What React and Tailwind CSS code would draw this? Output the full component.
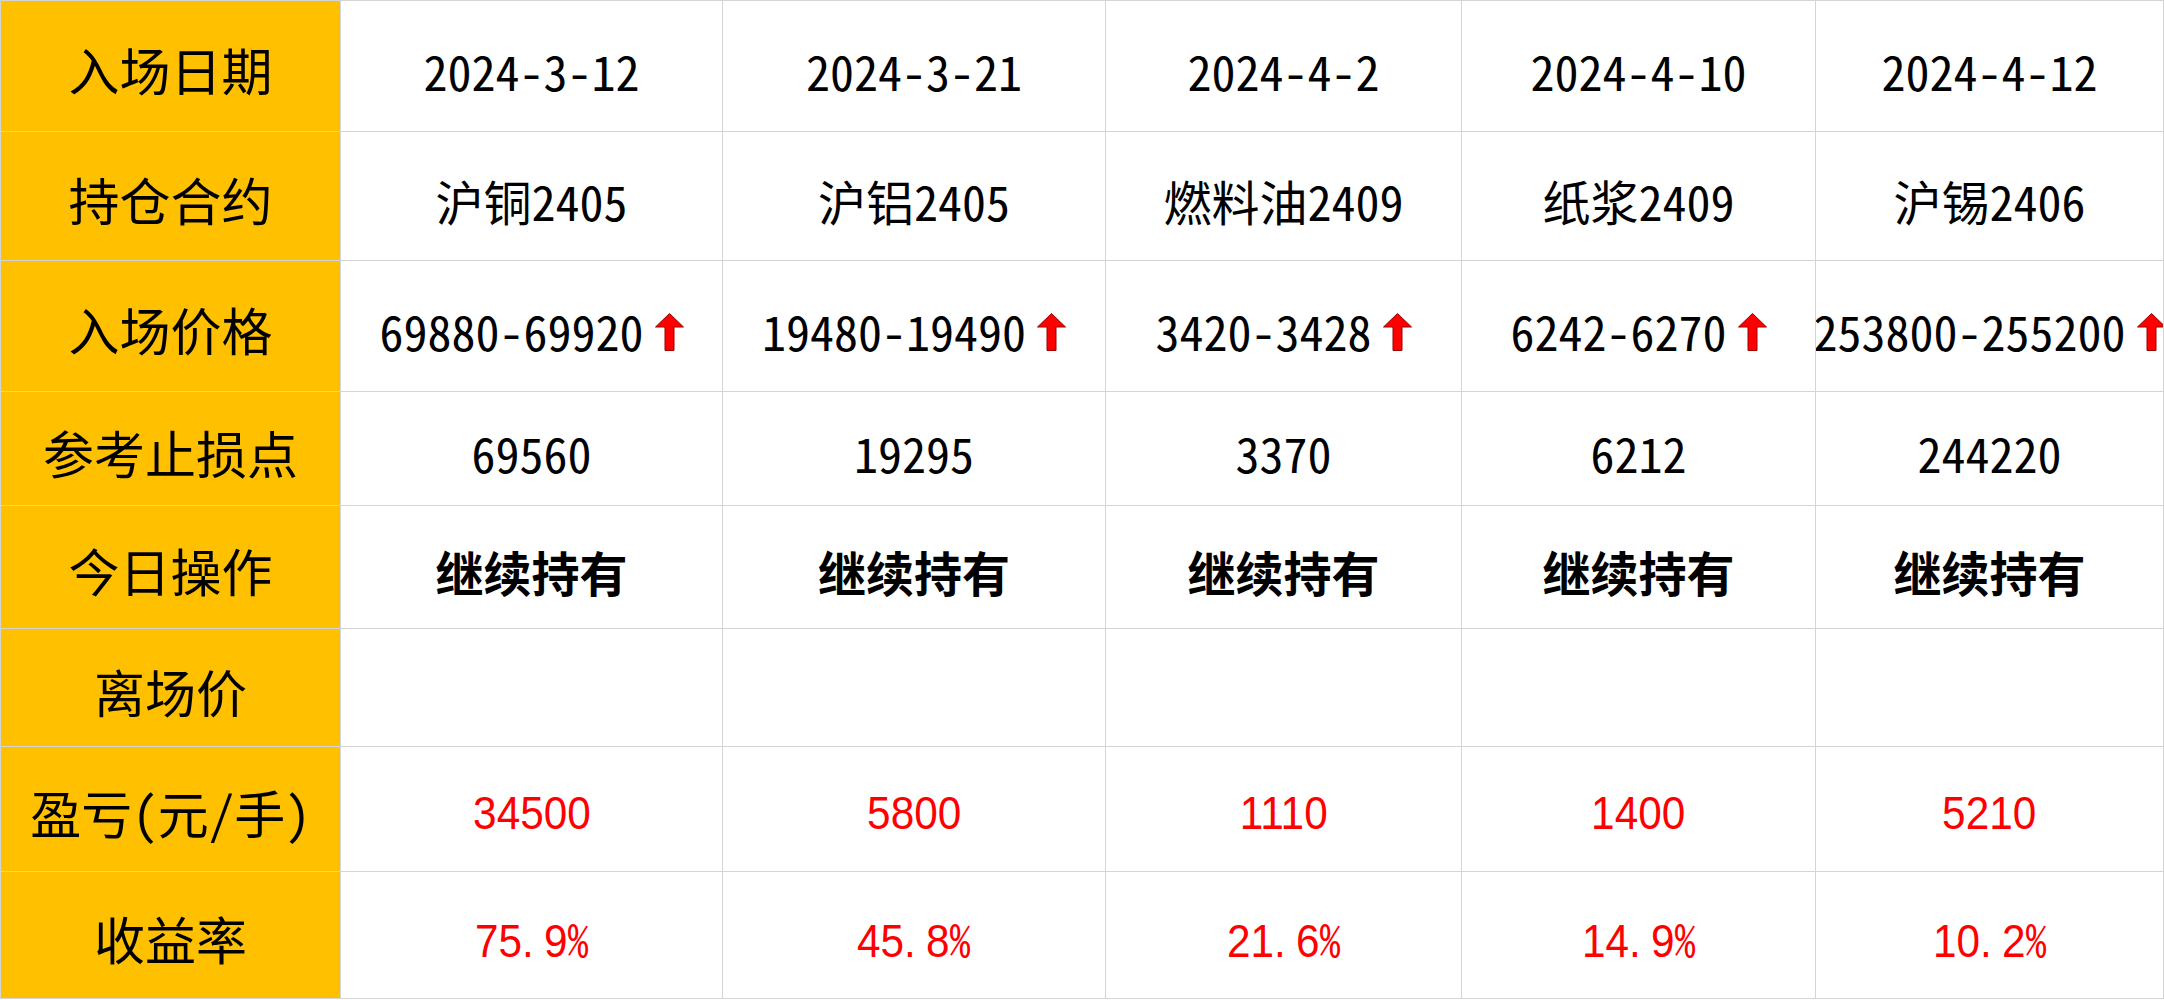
import React from "react";

const cols = [
  { date: "2024-3-12", c: "沪铜2405", p: "69880-69920", s: "69560", pnl: "34500", r: ["75", "9"] },
  { date: "2024-3-21", c: "沪铝2405", p: "19480-19490", s: "19295", pnl: "5800", r: ["45", "8"] },
  { date: "2024-4-2", c: "燃料油2409", p: "3420-3428", s: "3370", pnl: "1110", r: ["21", "6"] },
  { date: "2024-4-10", c: "纸浆2409", p: "6242-6270", s: "6212", pnl: "1400", r: ["14", "9"] },
  { date: "2024-4-12", c: "沪锡2406", p: "253800-255200", s: "244220", pnl: "5210", r: ["10", "2"] },
];

const labels = ["入场日期", "持仓合约", "入场价格", "参考止损点", "今日操作", "离场价", "盈亏(元/手)", "收益率"];

function Arrow() {
  return (
    <svg width="29" height="38" viewBox="0 0 29 38" className="ml-[11px] mt-[4px] shrink-0">
      <path d="M0.5 14 L14.5 0.5 L28.5 14 L19 14 L19 37.5 L10 37.5 L10 14 Z" fill="#ff0000" stroke="#9a0000" strokeWidth="1" />
    </svg>
  );
}

function Cell({ children, head }) {
  return (
    <div
      className={`flex items-center justify-center overflow-hidden whitespace-nowrap pt-[7px] ${head ? "bg-[#ffc000]" : "bg-white"}`}
    >
      {children}
    </div>
  );
}

const black = "text-[48px] leading-none text-black";
const red = "scale-x-[0.92] text-[46px] leading-none text-[#ff0000] font-['Liberation_Sans',Arial,sans-serif]";

export default function App() {
  const rows = [
    cols.map((d) => <span className={black}>{d.date}</span>),
    cols.map((d) => <span className={black}>{d.c}</span>),
    cols.map((d) => (
      <span className="flex shrink-0 items-center">
        <span className={black}>{d.p}</span>
        <Arrow />
      </span>
    )),
    cols.map((d) => <span className={black}>{d.s}</span>),
    cols.map(() => <span className="text-[48px] font-bold leading-none text-black">继续持有</span>),
    cols.map(() => null),
    cols.map((d) => <span className={`inline-block ${red}`}>{d.pnl}</span>),
    cols.map((d) => (
      <span className={`inline-flex items-baseline ${red}`}>
        <span>{d.r[0]}</span>
        <span className="mr-[11px]">.</span>
        <span>{d.r[1]}</span>
        <span className="font-['Noto_Sans_Mono_CJK_SC','Noto_Sans_CJK_SC',sans-serif]">%</span>
      </span>
    )),
  ];

  return (
    <div className="h-[1000px] w-[2164px] bg-white font-['Noto_Sans_Mono_CJK_SC','Noto_Sans_CJK_SC',sans-serif]">
      <div className="grid grid-cols-[339px_381px_382px_355px_353px_347px] grid-rows-[130px_128px_130px_113px_122px_117px_124px_126px] gap-px bg-[#d4d4d4] p-px">
        {labels.map((lab, i) => (
          <React.Fragment key={lab}>
            <Cell head>
              <span className="text-[51px] leading-none text-black">{lab}</span>
            </Cell>
            {rows[i].map((content, j) => (
              <Cell key={j}>{content}</Cell>
            ))}
          </React.Fragment>
        ))}
      </div>
    </div>
  );
}
